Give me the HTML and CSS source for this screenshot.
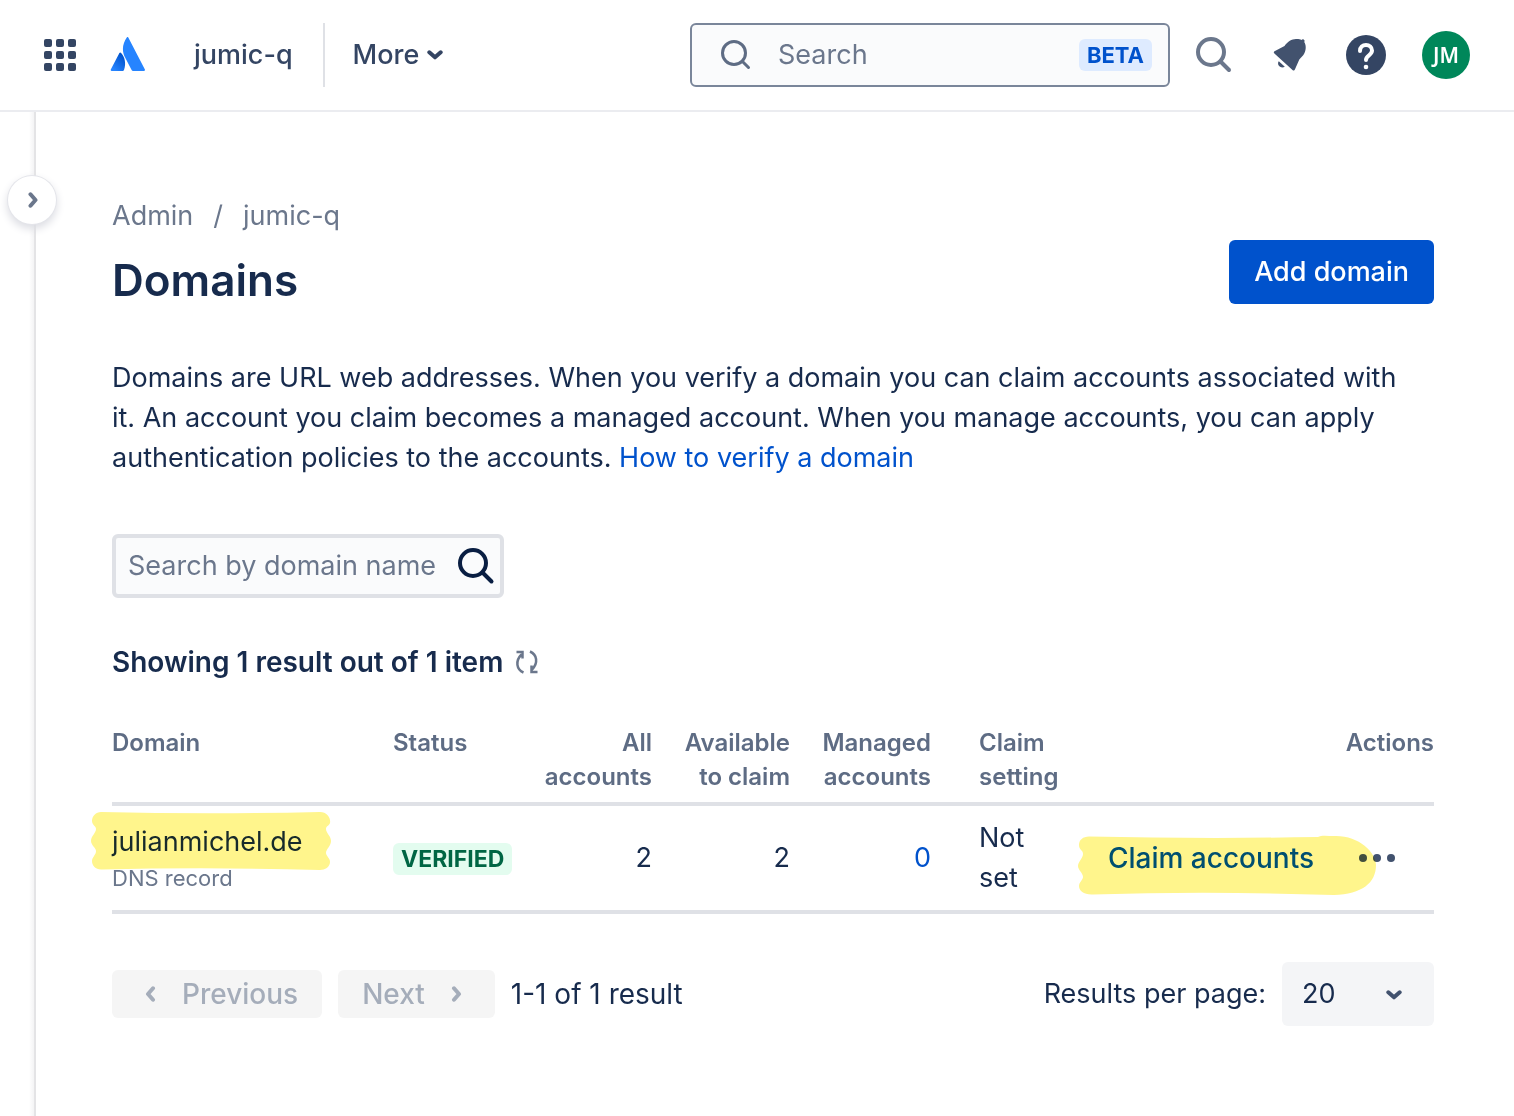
FILE: index.html
```html
<!DOCTYPE html>
<html lang="en">
<head>
  <meta charset="UTF-8">
  <meta name="viewport" content="width=device-width, initial-scale=1.0">
  <title>Domains | Admin</title>
  <link rel="stylesheet" href="styles.css">
</head>
<body>

<header class="topbar">
  <button class="icon-button apps" type="button" aria-label="Switch to">
    <svg width="32" height="32" viewBox="0 0 32 32" fill="#344563">
      <rect x="0" y="0" width="8" height="8" rx="2"/>
      <rect x="12" y="0" width="8" height="8" rx="2"/>
      <rect x="24" y="0" width="8" height="8" rx="2"/>
      <rect x="0" y="12" width="8" height="8" rx="2"/>
      <rect x="12" y="12" width="8" height="8" rx="2"/>
      <rect x="24" y="12" width="8" height="8" rx="2"/>
      <rect x="0" y="24" width="8" height="8" rx="2"/>
      <rect x="12" y="24" width="8" height="8" rx="2"/>
      <rect x="24" y="24" width="8" height="8" rx="2"/>
    </svg>
  </button>
  <a class="logo" href="#" aria-label="Atlassian">
    <svg width="36" height="36" viewBox="0 0 36 36">
      <defs>
        <linearGradient id="logo-fill" x1="0.9" y1="0.2" x2="0.3" y2="1">
          <stop offset="0" stop-color="#0052cc"/>
          <stop offset="1" stop-color="#2684ff"/>
        </linearGradient>
      </defs>
      <path fill="url(#logo-fill)" d="M9.4 15.900c.4-.7 1.300-.7 1.700 0 3.400 3.800 5.400 9.600 2.900 17.200-.1.500-.5.800-1 .8H1.600c-.7 0-1.100-.7-.8-1.300z"/>
      <path fill="#2684ff" d="M16.800.4c.3-.6 1.100-.6 1.500 0L34.900 32.600c.3.600-.1 1.300-.8 1.300H23.100c-.7 0-1.200-.3-1.500-1L15.100 20.600C11.600 13.700 12.400 6.900 16.800.4z"/>
    </svg>
  </a>
  <a class="org" href="#">jumic-q</a>
  <button class="more" type="button">More
    <svg width="16" height="12" viewBox="0 0 16 12" fill="none" stroke="currentColor" stroke-width="4" stroke-linecap="round" stroke-linejoin="round"><path d="M2.300 3.300 8 8.300l5.700-5"/></svg>
  </button>

  <div class="search">
    <svg width="32" height="32" viewBox="0 0 32 32" fill="none" stroke="#5e6c84" stroke-width="3" stroke-linecap="round"><circle cx="14" cy="14" r="11.500"/><path d="M22.500 22.500l6 6"/></svg>
    <input type="text" placeholder="Search" aria-label="Search">
    <span class="beta">BETA</span>
  </div>
  <div class="tools">
    <button class="icon-button" type="button" aria-label="Search">
      <svg width="40" height="40" viewBox="0 0 40 40" fill="none" stroke="#6b778c" stroke-width="4" stroke-linecap="round"><circle cx="17" cy="17" r="13"/><path d="M27 27l8 8"/></svg>
    </button>
    <button class="icon-button" type="button" aria-label="Notifications">
      <svg width="40" height="40" viewBox="0 0 40 40" fill="#42526e"><path d="M4.500 16.300 14.500 11C18 6 21.500 4 26 3.900c2.500-.1 4.200.3 5.500 1 .8-.8 1.600-.8 2.400-.2.900.700.9 1.500.3 2.300C36 9.500 36.400 14 34.500 18c-1.300 2.800-3.500 4.400-5.200 6.500L25 34.300c-.5 1.300-1.500 1.600-2.500.7L4.400 18.500c-.8-.8-.9-1.600.1-2.200z"/><path d="M8.800 26.200l6 5.500c-1.900 1.200-4.300.9-5.700-.6-1.300-1.500-1.400-3.600-.3-4.900z"/></svg>
    </button>
    <button class="icon-button" type="button" aria-label="Help">
      <svg width="40" height="40" viewBox="0 0 40 40"><circle cx="20" cy="20" r="20" fill="#344563"/><path d="M14 16c0-4 2.700-6 6-6s6 2.200 6 5.600c0 5-6 4.400-6 9.400" fill="none" stroke="#fff" stroke-width="4" stroke-linecap="round"/><circle cx="20" cy="32" r="2.300" fill="#fff"/></svg>
    </button>
    <button class="avatar" type="button">JM</button>
  </div>
</header>

<div class="layout">
  <aside class="sidebar">
    <button class="expand" type="button" aria-label="Expand sidebar">
      <svg width="12" height="16" viewBox="0 0 12 16" fill="none" stroke="#6b778c" stroke-width="4" stroke-linecap="round" stroke-linejoin="round"><path d="M4.500 2.300 9.500 8l-5 5.700"/></svg>
    </button>
  </aside>

  <main class="content">
    <nav class="breadcrumbs" aria-label="Breadcrumbs">
      <a href="#">Admin</a><span>/</span><a href="#">jumic-q</a>
    </nav>
    <div class="page-header">
      <h1>Domains</h1>
      <button class="primary" type="button">Add domain</button>
    </div>

    <p class="intro">Domains are URL web addresses. When you verify a domain you can claim accounts associated with it. An account you claim becomes a managed account. When you manage accounts, you can apply authentication policies to the accounts. <a href="#">How to verify a domain</a></p>

    <div class="filter">
      <input type="text" placeholder="Search by domain name" aria-label="Search by domain name">
      <svg width="40" height="40" viewBox="0 0 40 40" fill="none" stroke="#091e42" stroke-width="4" stroke-linecap="round"><circle cx="17" cy="17" r="13"/><path d="M27 27l8.500 8.500"/></svg>
    </div>

    <div class="summary">
      <h2>Showing 1 result out of 1 item</h2>
      <button class="icon-button" type="button" aria-label="Refresh">
        <svg width="24" height="24" viewBox="0 0 24 24" fill="none" stroke="#6b778c" stroke-width="2.500"><path d="M8.500 22.500C1.500 19.500 0 11 6.500 4.500M1.500 2h6v6.500"/><path d="M15 1.500c7 3 8.500 11.500 2 18M22.500 22h-6v-6.500"/></svg>
      </button>
    </div>

    <table class="domains">
      <colgroup>
        <col class="col-domain">
        <col class="col-status">
        <col class="col-all">
        <col class="col-available">
        <col class="col-managed">
        <col class="col-setting">
        <col>
      </colgroup>
      <thead>
        <tr>
          <th>Domain</th>
          <th>Status</th>
          <th class="number">All accounts</th>
          <th class="number">Available to claim</th>
          <th class="number">Managed accounts</th>
          <th class="setting">Claim setting</th>
          <th class="number">Actions</th>
        </tr>
      </thead>
      <tbody>
        <tr>
          <td>
            <div class="marked">
              julianmichel.de
              <svg class="marker marker-domain" width="240" height="58" viewBox="0 0 240 58" fill="#fff58c"><path d="M10 0Q120 2.500 229 0C236 0 240 6 239 11 238 14 235 14 235 17 235 21 240 24 240 29 240 34 235 37 235 41 235 44 239 46 239 50 239 55 234 58 229 58Q120 55 11 57.500C5 58 1 54 1 49 1 45 5 43 5 39 5 36 0 33 0 29 0 24 5 21 5 17 5 14 1 13 1 9 1 4 5 0 10 0z"/></svg>
            </div>
            <div class="record">DNS record</div>
          </td>
          <td><span class="verified">VERIFIED</span></td>
          <td class="number">2</td>
          <td class="number">2</td>
          <td class="number"><a href="#">0</a></td>
          <td class="setting">Not set</td>
          <td>
            <div class="actions">
              <button class="claim" type="button">Claim accounts</button>
              <button class="icon-button" type="button" aria-label="More actions">
                <svg width="40" height="40" viewBox="0 0 40 40" fill="#42526e"><circle cx="5" cy="20" r="4"/><circle cx="19" cy="20" r="4"/><circle cx="33" cy="20" r="4"/></svg>
              </button>
              <svg class="marker marker-claim" width="298" height="60" viewBox="0 0 298 60" fill="#fff58c"><path d="M11 1.500Q125 4 240 2C243 0 250 1 256 1 280 0 298 17 298 30 298 48 284 59 256 60Q130 56 15 59.500C6 60 1 56 1 51 1 47 5 45 5 42 5 38 0 35 0 31 0 27 5 23 5 19 5 15 1 15 1 10 1 5 5 1.500 11 1.500z"/></svg>
            </div>
          </td>
        </tr>
      </tbody>
    </table>

    <div class="pagination">
      <button class="page-button" type="button" disabled>
        <svg width="12" height="16" viewBox="0 0 12 16" fill="none" stroke="currentColor" stroke-width="4" stroke-linecap="round" stroke-linejoin="round"><path d="M9 2.300 4 8l5 5.700"/></svg>
        Previous
      </button>
      <button class="page-button" type="button" disabled>
        Next
        <svg width="12" height="16" viewBox="0 0 12 16" fill="none" stroke="currentColor" stroke-width="4" stroke-linecap="round" stroke-linejoin="round"><path d="M3 2.300 8 8l-5 5.700"/></svg>
      </button>
      <span class="range">1-1 of 1 result</span>
      <label class="per-page-label" for="per-page">Results per page:</label>
      <div class="per-page">
        <select id="per-page">
          <option>20</option>
          <option>50</option>
          <option>100</option>
        </select>
        <svg width="16" height="12" viewBox="0 0 16 12" fill="none" stroke="#42526e" stroke-width="4" stroke-linecap="round" stroke-linejoin="round"><path d="M2.300 3.300 8 8.300l5.700-5"/></svg>
      </div>
    </div>
  </main>
</div>

</body>
</html>
```
FILE: styles.css
```css
* {
  box-sizing: border-box;
}
body {
  margin: 0;
  min-height: 100vh;
  display: flex;
  flex-direction: column;
  background-color: #ffffff;
  color: #172b4d;
  font-family: Inter, "Liberation Sans", sans-serif;
  font-size: 27px;
  line-height: 40px;
}
svg {
  display: block;
  flex: none;
}
a {
  color: #0052cc;
  text-decoration: none;
}
button,
input,
select {
  margin: 0;
  padding: 0;
  border: 0;
  font: inherit;
  color: inherit;
  background: none;
}
input {
  flex: 1;
  min-width: 0;
  outline: none;
}
input::placeholder {
  color: #6b778c;
  opacity: 1;
}
.icon-button {
  display: flex;
  cursor: pointer;
}

/* top bar */
.topbar {
  display: flex;
  align-items: center;
  height: 112px;
  padding: 0 44px;
  border-bottom: 2px solid #ebecf0;
  color: #344563;
  font-weight: 500;
}
.logo {
  margin-left: 34px;
}
.org {
  margin-left: 48px;
  color: inherit;
}
.more {
  display: flex;
  align-items: center;
  gap: 8px;
  height: 64px;
  margin-left: 30px;
  padding-left: 28px;
  border-left: 2px solid #dfe1e6;
}
.search {
  display: flex;
  align-items: center;
  width: 480px;
  height: 64px;
  margin-left: auto;
  padding: 0 16px 0 28px;
  border: 2px solid #7a869a;
  border-radius: 6px;
  background-color: #fafbfc;
  font-weight: 400;
}
.search input {
  margin-left: 26px;
}
.beta,
.verified {
  display: inline-block;
  padding: 0 8px;
  border-radius: 6px;
  font-size: 22px;
  font-weight: 700;
  line-height: 32px;
}
.beta {
  background-color: #deebff;
  color: #0052cc;
}
.tools {
  display: flex;
  align-items: center;
  gap: 36px;
  margin-left: 24px;
}
.avatar {
  width: 48px;
  height: 48px;
  border-radius: 50%;
  background-color: #00875a;
  color: #ffffff;
  font-family: "Noto Sans", sans-serif;
  font-size: 21px;
  font-weight: 600;
}

/* sidebar and content */
.layout {
  flex: 1;
  display: flex;
}
.sidebar {
  position: relative;
  flex: none;
  width: 36px;
  border-right: 2px solid #e4e4e6;
  background: linear-gradient(to left, #f4f4f5, #ffffff 5px);
}
.expand {
  position: absolute;
  top: 64px;
  left: 8px;
  display: flex;
  align-items: center;
  justify-content: center;
  width: 48px;
  height: 48px;
  border-radius: 50%;
  background-color: #ffffff;
  box-shadow: 0 0 0 1px #e4e5ea, 0 4px 8px 1px #dcdde3;
}
.content {
  flex: 1;
  padding: 84px 80px 84px 76px;
}
.breadcrumbs {
  display: flex;
  gap: 20px;
  color: #6b778c;
}
.breadcrumbs a {
  color: inherit;
}
.page-header {
  display: flex;
  align-items: flex-start;
  justify-content: space-between;
  margin-top: 4px;
}
h1 {
  margin: 12px 0 0;
  font-size: 44px;
  font-weight: 600;
  line-height: 56px;
}
.primary {
  height: 64px;
  padding: 0 25px;
  border-radius: 6px;
  background-color: #0052cc;
  color: #ffffff;
  font-weight: 500;
}
.intro {
  margin: 50px 0 0;
  padding-right: 16px;
}
.filter {
  display: flex;
  align-items: center;
  width: 392px;
  height: 64px;
  margin-top: 56px;
  padding: 0 4px 0 12px;
  border: 4px solid #dfe1e6;
  border-radius: 6px;
  background-color: #fafbfc;
}
.summary {
  display: flex;
  align-items: center;
  gap: 12px;
  margin-top: 44px;
}
h2 {
  margin: 0;
  font-size: 28px;
  font-weight: 600;
  line-height: 40px;
}

/* domain list */
.domains {
  width: 100%;
  margin-top: 36px;
  border-collapse: collapse;
  table-layout: fixed;
}
.col-domain {
  width: 281px;
}
.col-status {
  width: 135px;
}
.col-all {
  width: 124px;
}
.col-available {
  width: 138px;
}
.col-managed {
  width: 141px;
}
.col-setting {
  width: 147px;
}
.domains tr {
  border-bottom: 4px solid #dfe1e6;
}
.domains th {
  padding: 8px 0;
  color: #5e6c84;
  font-size: 24px;
  font-weight: 600;
  line-height: 34px;
  text-align: left;
  vertical-align: top;
}
.domains td {
  padding: 12px 0;
}
.domains .number {
  padding-left: 16px;
  text-align: right;
}
.domains .setting {
  padding-left: 48px;
  padding-right: 16px;
}
.marked {
  position: relative;
}
.marker {
  position: absolute;
  mix-blend-mode: multiply;
  pointer-events: none;
}
.marker-domain {
  top: -10px;
  left: -21px;
}
.marker-claim {
  top: -3px;
  right: 58px;
}
.record {
  color: #6b778c;
  font-size: 22px;
  line-height: 32px;
}
.verified {
  background-color: #e3fcef;
  color: #006644;
  font-size: 23px;
}
.actions {
  position: relative;
  display: flex;
  align-items: center;
  justify-content: flex-end;
  gap: 44px;
  padding-right: 36px;
}
.claim {
  color: #0052cc;
  font-size: 28px;
  font-weight: 500;
}

/* pagination */
.pagination {
  display: flex;
  align-items: center;
  gap: 16px;
  margin-top: 48px;
}
.page-button {
  display: flex;
  align-items: center;
  gap: 26px;
  height: 48px;
  padding: 0 24px 0 32px;
  border-radius: 6px;
  background-color: #f5f5f5;
  color: #a5adba;
  font-size: 28px;
  font-weight: 500;
}
.page-button + .page-button {
  padding: 0 32px 0 24px;
}
.range {
  font-size: 28px;
}
.per-page-label {
  margin-left: auto;
}
.per-page {
  position: relative;
}
.per-page select {
  width: 152px;
  height: 64px;
  padding: 0 20px;
  border-radius: 6px;
  background-color: #f4f5f7;
  appearance: none;
}
.per-page svg {
  position: absolute;
  top: 27px;
  right: 32px;
  pointer-events: none;
}
```
